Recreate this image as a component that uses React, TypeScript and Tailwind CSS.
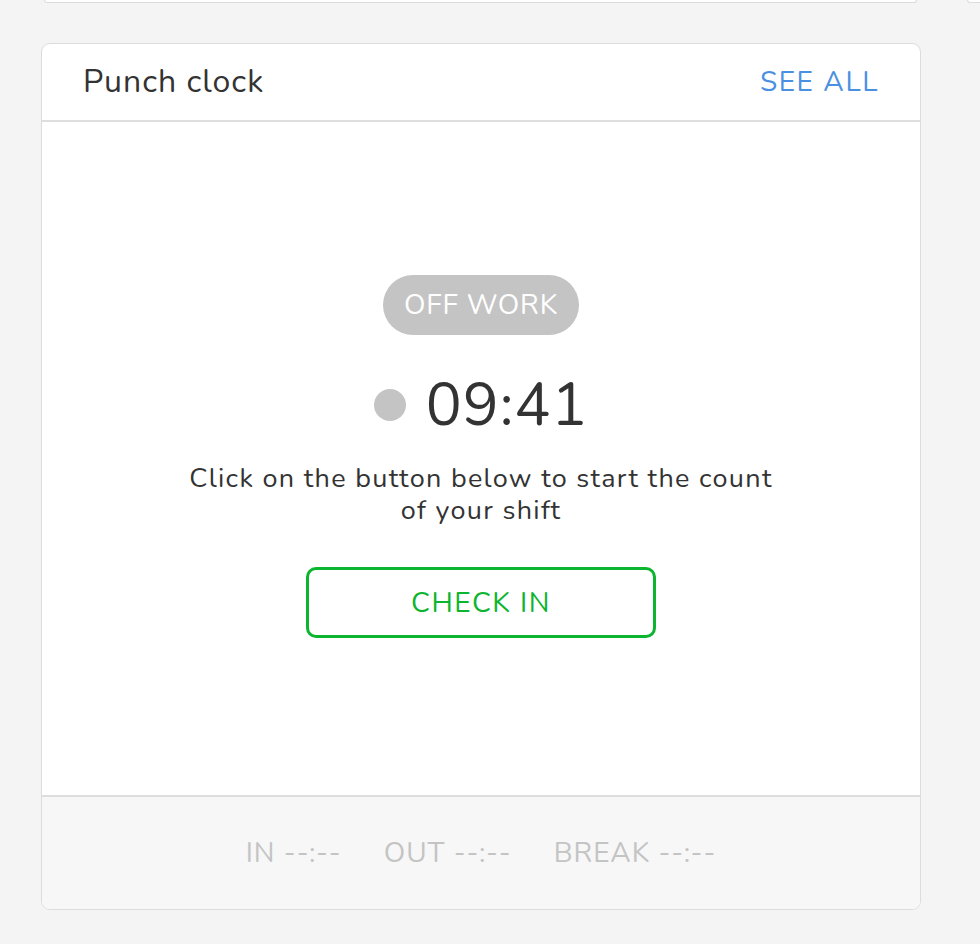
import React from 'react';

const font = { fontFamily: '"Nunito", "Noto Sans", "Open Sans", sans-serif' };

const FooterStat: React.FC<{ label: string }> = ({ label }) => (
  <span className="whitespace-nowrap">{label} --:--</span>
);

export default function App() {
  return (
    <div className="min-h-[944px] w-[980px] overflow-hidden bg-[#f4f4f4]" style={font}>
      <div className="flex">
        <div className="ml-[44px] h-[3px] w-[873px] rounded-b-md border-x border-b border-[#dcdcdc] bg-white" />
        <div className="ml-[50px] h-[3px] flex-1 rounded-bl-md border-b border-l border-[#dcdcdc] bg-white" />
      </div>

      <div className="ml-[41px] mt-[40px] flex h-[867px] w-[880px] flex-col overflow-hidden rounded-[9px] border border-[#dcdcdc] bg-white">
        <div className="flex h-[78px] shrink-0 items-center justify-between border-b-2 border-[#dedede] pl-[41px] pr-[41px]">
          <h2 className="text-[32px] tracking-[1px] text-[#333]">Punch clock</h2>
          <a className="text-[28px] tracking-[1.6px] text-[#4a90e2]">SEE ALL</a>
        </div>

        <div className="flex flex-1 flex-col items-center pt-[153px]">
          <span className="flex h-[60px] items-center rounded-full bg-[#c4c4c4] px-[21px] text-[28px] tracking-[0.8px] text-white">
            OFF WORK
          </span>
          <div className="mt-[40px] flex items-center gap-[20px]">
            <span className="h-[32px] w-[32px] rounded-full bg-[#c4c4c4]" />
            <span className="text-[60px] leading-none tracking-[1px] text-[#333]">09:41</span>
          </div>
          <p className="mt-[28px] w-[680px] text-center text-[27px] leading-[32px] tracking-[1.3px] text-[#333]">
            Click on the button below to start the count <br />
            of your shift
          </p>
          <button className="mt-[40px] flex h-[71px] w-[350px] items-center justify-center rounded-[10px] border-[3px] border-[#0cb52f] text-[28px] tracking-[1.5px] text-[#0cb52f]">
            CHECK IN
          </button>
        </div>

        <div className="flex h-[114px] shrink-0 items-center justify-center gap-[42px] border-t-2 border-[#dedede] bg-[#f7f7f7] text-[28px] tracking-[1px] text-[#c4c4c4]">
          <FooterStat label="IN" />
          <FooterStat label="OUT" />
          <FooterStat label="BREAK" />
        </div>
      </div>
    </div>
  );
}
